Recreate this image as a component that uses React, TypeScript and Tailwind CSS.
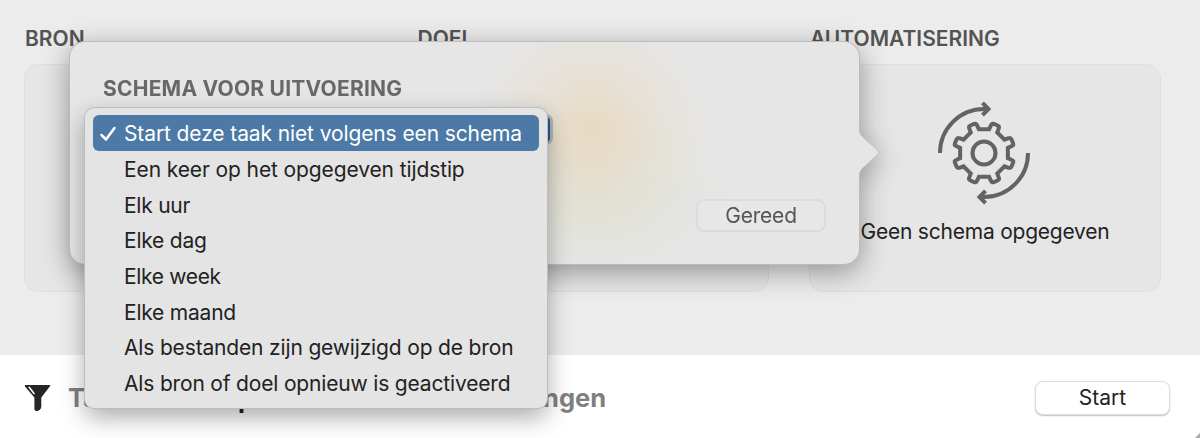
const options = [
  { label: "Start deze taak niet volgens een schema", spacing: "tracking-[-0.11px]" },
  { label: "Een keer op het opgegeven tijdstip", spacing: "tracking-[-0.11px]" },
  { label: "Elk uur", spacing: "tracking-[-0.25px]" },
  { label: "Elke dag", spacing: "tracking-[-0.22px]" },
  { label: "Elke week", spacing: "tracking-[-0.33px]" },
  { label: "Elke maand", spacing: "tracking-[-0.22px]" },
  { label: "Als bestanden zijn gewijzigd op de bron", spacing: "tracking-[-0.16px]" },
  { label: "Als bron of doel opnieuw is geactiveerd", spacing: "tracking-[-0.17px]" },
];

// eight teeth, starting half a step away from the top
const gearPath = () => {
  const points: string[] = [];
  for (let i = 0; i < 8; i++) {
    const a = ((22.5 + i * 45) * Math.PI) / 180;
    const at = (side: number, r: number) =>
      `${(50 + r * Math.sin(a) + side * Math.cos(a)).toFixed(2)} ${(55 - r * Math.cos(a) + side * Math.sin(a)).toFixed(2)}`;
    points.push(
      `${i === 0 ? "M" : "L"}${at(-4.4, 24)} L${at(-4.2, 28.4)} Q${at(-4.2, 30.6)} ${at(-2, 30.6)} L${at(2, 30.6)} Q${at(4.2, 30.6)} ${at(4.2, 28.4)} L${at(4.4, 24)}`
    );
  }
  return points.join(" ") + "Z";
};

function GearIcon() {
  return (
    <svg
      width="100"
      height="110"
      viewBox="0 0 100 110"
      fill="none"
      stroke="#636363"
      strokeWidth="4"
      strokeLinejoin="miter"
    >
      <path d={gearPath()} />
      <circle cx="50" cy="55" r="11.5" />
      <path d="M6 55A44 44 0 0 1 50 11H54" />
      <path d="M48.5 4.8L54.500 11L48.5 17.2" />
      <path d="M94 55A44 44 0 0 1 50 99H46" />
      <path d="M51.5 92.8L45.500 99L51.5 105.2" />
    </svg>
  );
}

function FilterIcon() {
  return (
    <svg className="mt-[3px]" width="28" height="28" viewBox="0 0 28 28">
      <path
        d="M1.5 1H25.5Q26.8 1 26 2.3L17.3 13.5V22.5Q17.3 24.5 15.5 26L13.5 27Q10.6 27.6 10.4 25V13.5L1 2.5Q.3 1 1.5 1Z"
        fill="#262626"
      />
      <path d="M5.2 3.3L10 9.5" stroke="#fff" strokeWidth="1.6" strokeLinecap="round" />
    </svg>
  );
}

function Column({ title, children }: { title: string; children?: React.ReactNode }) {
  return (
    <div className="w-[352px]">
      <h2 className="h-[26px] pl-px text-[21px] leading-[26px] font-semibold text-[#545454]">{title}</h2>
      <div className="mt-[11.5px] flex h-[228px] flex-col items-center rounded-[14px] border-[1.5px] border-[#dfdfdf] bg-[#e6e6e6]">
        {children}
      </div>
    </div>
  );
}

export default function App() {
  return (
    <div className="relative h-[438px] w-[1200px] overflow-hidden bg-white font-['Inter',sans-serif] whitespace-nowrap text-[#222]">
      <main className="flex h-[355px] gap-[40.5px] bg-[#ececec] pt-[26px] pl-6">
        <Column title="BRON" />
        <Column title="DOEL" />
        <Column title="AUTOMATISERING">
          <div className="mt-[33px] ml-[-3px]">
            <GearIcon />
          </div>
          <p className="mt-[10px] text-[21px] leading-[28px] tracking-[-0.22px]">Geen schema opgegeven</p>
        </Column>
      </main>

      <footer className="flex h-[83px] items-center justify-between pr-[30px] pl-6">
        <div className="flex items-center">
          <FilterIcon />
          <div className="ml-4 flex h-8 items-center pt-[4px] text-[25.5px] font-bold text-[#808080]">
            <span className="w-[170px]">Ta</span>
            <span className="w-[305px] pt-px text-[#222]">p</span>
            <span>ngen</span>
          </div>
        </div>
        <button className="mt-[2px] h-[34px] w-[135px] rounded-[8px] border border-[#dedede] bg-white text-[21px] leading-none shadow-[0_1px_1.5px_rgba(0,0,0,0.25)]">
          Start
        </button>
      </footer>

      <svg className="absolute right-0 bottom-0" width="5" height="5" viewBox="0 0 5 5">
        <path d="M5 0V5H0Z" fill="#aaa" />
      </svg>

      <section className="absolute top-[42px] left-[70px] h-[222px] w-[789px] drop-shadow-[0_7px_14px_rgba(0,0,0,0.36)]">
        <div className="flex h-full flex-col items-start justify-between rounded-[15px] bg-[#e6e6e6] bg-[radial-gradient(ellipse_120px_120px_at_522px_88px,rgba(232,215,185,0.8)_0%,rgba(232,217,190,0.65)_25%,rgba(232,221,200,0.35)_60%,rgba(230,228,220,0)_100%),radial-gradient(ellipse_140px_90px_at_525px_150px,rgba(220,224,210,0.7)_0%,rgba(228,229,224,0)_100%)] pt-[33px] pr-[33px] pb-[32px] pl-[33px] shadow-[0_0_0_1px_#bcbcbc]">
          <h3 className="text-[21px] leading-[27px] font-bold tracking-[0.22px] text-[#686868]">
            SCHEMA VOOR UITVOERING
          </h3>
          <button className="h-[33px] w-[130px] self-end rounded-[8px] border-2 border-[#dcdcdc] bg-[#e7e7e7] text-[21px] leading-none tracking-[-0.2px] text-[#555]">
            Gereed
          </button>
        </div>
        <svg className="absolute top-[86px] left-[788px]" width="22" height="50" viewBox="0 0 22 50">
          <path d="M0 0H1C1 5 3 7.500 6 10L19.500 22Q22 24.500 19.500 27L6 39C3 41.500 1 44 1 49H0Z" fill="#e6e6e6" />
          <path
            d="M1.500 0C1.500 5 3 7.500 6 10L19.500 22Q22 24.500 19.500 27L6 39C3 41.500 1.500 44 1.500 49"
            fill="none"
            stroke="#bcbcbc"
          />
        </svg>
      </section>

      <div className="absolute top-[114px] left-[520px] h-[31px] w-[33px] rounded-[7px] border-[3px] border-[#b7b4ae] bg-[#2059a0]" />

      <ul className="absolute top-[108px] left-[85px] flex h-[300px] w-[462px] flex-col rounded-[9px] bg-[#e4e4e4] p-[8px] pt-[7px] shadow-[0_0_0_1px_#bdbdbd,0_9px_24px_rgba(0,0,0,0.34)]">
        {options.map((option, index) => (
          <li
            key={option.label}
            className={
              index === 0
                ? "flex h-[36px] shrink-0 items-center rounded-[6px] bg-[#4c79a6] text-white"
                : "flex h-[35.7px] shrink-0 items-center"
            }
          >
            <span className="flex w-[31px] pl-[7px]">
              {index === 0 && (
                <svg width="18" height="18" viewBox="0 0 18 18" fill="none">
                  <path
                    d="M1.500 11L6 15.500L14.500 4"
                    stroke="#fff"
                    strokeWidth="2.500"
                    strokeLinecap="round"
                    strokeLinejoin="round"
                  />
                </svg>
              )}
            </span>
            <span className={`pt-px text-[21px] leading-none ${option.spacing}`}>{option.label}</span>
          </li>
        ))}
      </ul>
    </div>
  );
}
